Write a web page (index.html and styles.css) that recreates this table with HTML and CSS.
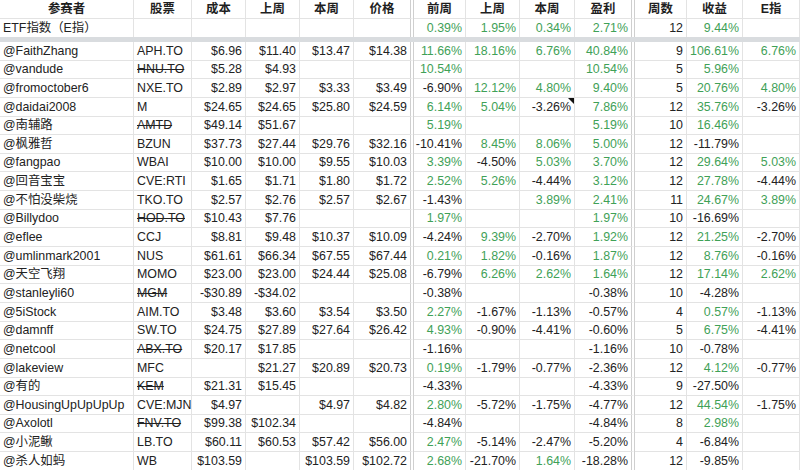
FILE: index.html
```html
<!DOCTYPE html>
<html lang="zh">
<head>
<meta charset="utf-8">
<title>参赛者</title>
<link rel="stylesheet" href="styles.css">
</head>
<body>
<div class="sheet">
  <div class="row head">
    <div class="c">参赛者</div><div class="c">股票</div><div class="c">成本</div><div class="c">上周</div><div class="c">本周</div><div class="c dbl">价格</div><div class="c">前周</div><div class="c">上周</div><div class="c">本周</div><div class="c dbl">盈利</div><div class="c">周数</div><div class="c">收益</div><div class="c">E指</div>
  </div>
  <div class="row etf">
    <div class="c l">ETF指数（E指）</div><div class="c"></div><div class="c"></div><div class="c"></div><div class="c"></div><div class="c dbl"></div><div class="c g">0.39%</div><div class="c g">1.95%</div><div class="c g">0.34%</div><div class="c dbl g">2.71%</div><div class="c">12</div><div class="c g">9.44%</div><div class="c"></div>
  </div>
  <div class="band"></div>

  <div class="row"><div class="c l">@FaithZhang</div><div class="c l">APH.TO</div><div class="c">$6.96</div><div class="c">$11.40</div><div class="c">$13.47</div><div class="c dbl">$14.38</div><div class="c g">11.66%</div><div class="c g">18.16%</div><div class="c g">6.76%</div><div class="c dbl g">40.84%</div><div class="c">9</div><div class="c g">106.61%</div><div class="c g">6.76%</div></div>
  <div class="row"><div class="c l">@vandude</div><div class="c l s">HNU.TO</div><div class="c">$5.28</div><div class="c">$4.93</div><div class="c"></div><div class="c dbl"></div><div class="c g">10.54%</div><div class="c"></div><div class="c"></div><div class="c dbl g">10.54%</div><div class="c">5</div><div class="c g">5.96%</div><div class="c"></div></div>
  <div class="row"><div class="c l">@fromoctober6</div><div class="c l">NXE.TO</div><div class="c">$2.89</div><div class="c">$2.97</div><div class="c">$3.33</div><div class="c dbl">$3.49</div><div class="c">-6.90%</div><div class="c g">12.12%</div><div class="c g">4.80%</div><div class="c dbl g">9.40%</div><div class="c">5</div><div class="c g">20.76%</div><div class="c g">4.80%</div></div>
  <div class="row"><div class="c l">@daidai2008</div><div class="c l">M</div><div class="c">$24.65</div><div class="c">$24.65</div><div class="c">$25.80</div><div class="c dbl">$24.59</div><div class="c g">6.14%</div><div class="c g">5.04%</div><div class="c note">-3.26%</div><div class="c dbl g">7.86%</div><div class="c">12</div><div class="c g">35.76%</div><div class="c">-3.26%</div></div>
  <div class="row"><div class="c l">@南辅路</div><div class="c l s">AMTD</div><div class="c">$49.14</div><div class="c">$51.67</div><div class="c"></div><div class="c dbl"></div><div class="c g">5.19%</div><div class="c"></div><div class="c"></div><div class="c dbl g">5.19%</div><div class="c">10</div><div class="c g">16.46%</div><div class="c"></div></div>
  <div class="row"><div class="c l">@枫雅哲</div><div class="c l">BZUN</div><div class="c">$37.73</div><div class="c">$27.44</div><div class="c">$29.76</div><div class="c dbl">$32.16</div><div class="c">-10.41%</div><div class="c g">8.45%</div><div class="c g">8.06%</div><div class="c dbl g">5.00%</div><div class="c">12</div><div class="c">-11.79%</div><div class="c"></div></div>
  <div class="row"><div class="c l">@fangpao</div><div class="c l">WBAI</div><div class="c">$10.00</div><div class="c">$10.00</div><div class="c">$9.55</div><div class="c dbl">$10.03</div><div class="c g">3.39%</div><div class="c">-4.50%</div><div class="c g">5.03%</div><div class="c dbl g">3.70%</div><div class="c">12</div><div class="c g">29.64%</div><div class="c g">5.03%</div></div>
  <div class="row"><div class="c l">@回音宝宝</div><div class="c l">CVE:RTI</div><div class="c">$1.65</div><div class="c">$1.71</div><div class="c">$1.80</div><div class="c dbl">$1.72</div><div class="c g">2.52%</div><div class="c g">5.26%</div><div class="c">-4.44%</div><div class="c dbl g">3.12%</div><div class="c">12</div><div class="c g">27.78%</div><div class="c">-4.44%</div></div>
  <div class="row"><div class="c l">@不怕没柴烧</div><div class="c l">TKO.TO</div><div class="c">$2.57</div><div class="c">$2.76</div><div class="c">$2.57</div><div class="c dbl">$2.67</div><div class="c">-1.43%</div><div class="c"></div><div class="c g">3.89%</div><div class="c dbl g">2.41%</div><div class="c">11</div><div class="c g">24.67%</div><div class="c g">3.89%</div></div>
  <div class="row"><div class="c l">@Billydoo</div><div class="c l s">HOD.TO</div><div class="c">$10.43</div><div class="c">$7.76</div><div class="c"></div><div class="c dbl"></div><div class="c g">1.97%</div><div class="c"></div><div class="c"></div><div class="c dbl g">1.97%</div><div class="c">10</div><div class="c">-16.69%</div><div class="c"></div></div>
  <div class="row"><div class="c l">@eflee</div><div class="c l">CCJ</div><div class="c">$8.81</div><div class="c">$9.48</div><div class="c">$10.37</div><div class="c dbl">$10.09</div><div class="c">-4.24%</div><div class="c g">9.39%</div><div class="c">-2.70%</div><div class="c dbl g">1.92%</div><div class="c">12</div><div class="c g">21.25%</div><div class="c">-2.70%</div></div>
  <div class="row"><div class="c l">@umlinmark2001</div><div class="c l">NUS</div><div class="c">$61.61</div><div class="c">$66.34</div><div class="c">$67.55</div><div class="c dbl">$67.44</div><div class="c g">0.21%</div><div class="c g">1.82%</div><div class="c">-0.16%</div><div class="c dbl g">1.87%</div><div class="c">12</div><div class="c g">8.76%</div><div class="c">-0.16%</div></div>
  <div class="row"><div class="c l">@天空飞翔</div><div class="c l">MOMO</div><div class="c">$23.00</div><div class="c">$23.00</div><div class="c">$24.44</div><div class="c dbl">$25.08</div><div class="c">-6.79%</div><div class="c g">6.26%</div><div class="c g">2.62%</div><div class="c dbl g">1.64%</div><div class="c">12</div><div class="c g">17.14%</div><div class="c g">2.62%</div></div>
  <div class="row"><div class="c l">@stanleyli60</div><div class="c l s">MGM</div><div class="c">-$30.89</div><div class="c">-$34.02</div><div class="c"></div><div class="c dbl"></div><div class="c">-0.38%</div><div class="c"></div><div class="c"></div><div class="c dbl">-0.38%</div><div class="c">10</div><div class="c">-4.28%</div><div class="c"></div></div>
  <div class="row"><div class="c l">@5iStock</div><div class="c l">AIM.TO</div><div class="c">$3.48</div><div class="c">$3.60</div><div class="c">$3.54</div><div class="c dbl">$3.50</div><div class="c g">2.27%</div><div class="c">-1.67%</div><div class="c">-1.13%</div><div class="c dbl">-0.57%</div><div class="c">4</div><div class="c g">0.57%</div><div class="c">-1.13%</div></div>
  <div class="row"><div class="c l">@damnff</div><div class="c l">SW.TO</div><div class="c">$24.75</div><div class="c">$27.89</div><div class="c">$27.64</div><div class="c dbl">$26.42</div><div class="c g">4.93%</div><div class="c">-0.90%</div><div class="c">-4.41%</div><div class="c dbl">-0.60%</div><div class="c">5</div><div class="c g">6.75%</div><div class="c">-4.41%</div></div>
  <div class="row"><div class="c l">@netcool</div><div class="c l s">ABX.TO</div><div class="c">$20.17</div><div class="c">$17.85</div><div class="c"></div><div class="c dbl"></div><div class="c">-1.16%</div><div class="c"></div><div class="c"></div><div class="c dbl">-1.16%</div><div class="c">10</div><div class="c">-0.78%</div><div class="c"></div></div>
  <div class="row"><div class="c l">@lakeview</div><div class="c l">MFC</div><div class="c"></div><div class="c">$21.27</div><div class="c">$20.89</div><div class="c dbl">$20.73</div><div class="c g">0.19%</div><div class="c">-1.79%</div><div class="c">-0.77%</div><div class="c dbl">-2.36%</div><div class="c">12</div><div class="c g">4.12%</div><div class="c">-0.77%</div></div>
  <div class="row"><div class="c l">@有的</div><div class="c l s">KEM</div><div class="c">$21.31</div><div class="c">$15.45</div><div class="c"></div><div class="c dbl"></div><div class="c">-4.33%</div><div class="c"></div><div class="c"></div><div class="c dbl">-4.33%</div><div class="c">9</div><div class="c">-27.50%</div><div class="c"></div></div>
  <div class="row"><div class="c l">@HousingUpUpUpUp</div><div class="c l">CVE:MJN</div><div class="c">$4.97</div><div class="c"></div><div class="c">$4.97</div><div class="c dbl">$4.82</div><div class="c g">2.80%</div><div class="c">-5.72%</div><div class="c">-1.75%</div><div class="c dbl">-4.77%</div><div class="c">12</div><div class="c g">44.54%</div><div class="c">-1.75%</div></div>
  <div class="row"><div class="c l">@Axolotl</div><div class="c l s">FNV.TO</div><div class="c">$99.38</div><div class="c">$102.34</div><div class="c"></div><div class="c dbl"></div><div class="c">-4.84%</div><div class="c"></div><div class="c"></div><div class="c dbl">-4.84%</div><div class="c">8</div><div class="c g">2.98%</div><div class="c"></div></div>
  <div class="row"><div class="c l">@小泥鳅</div><div class="c l">LB.TO</div><div class="c">$60.11</div><div class="c">$60.53</div><div class="c">$57.42</div><div class="c dbl">$56.00</div><div class="c g">2.47%</div><div class="c">-5.14%</div><div class="c">-2.47%</div><div class="c dbl">-5.20%</div><div class="c">4</div><div class="c">-6.84%</div><div class="c"></div></div>
  <div class="row"><div class="c l">@杀人如蚂</div><div class="c l">WB</div><div class="c">$103.59</div><div class="c"></div><div class="c">$103.59</div><div class="c dbl">$102.72</div><div class="c g">2.68%</div><div class="c">-21.70%</div><div class="c g">1.64%</div><div class="c dbl">-18.28%</div><div class="c">12</div><div class="c">-9.85%</div><div class="c"></div></div>
</div>
</body>
</html>
```

FILE: styles.css
```css
html, body {
  margin: 0;
  padding: 0;
  background: #ffffff;
}

body {
  font-family: "Liberation Sans", "Noto Sans CJK SC", sans-serif;
  font-size: 12.4px;
  color: #222222;
  overflow: hidden;
}

.sheet {
  width: 800px;
}

.row {
  display: grid;
  grid-template-columns: 134px 58px 54px 54px 54px 60px 52px 54px 55px 60px 52px 56px 57px;
  height: 18.65px;
}

.row.head {
  height: 19px;
}

.row.etf {
  height: 18px;
}

.c {
  box-sizing: border-box;
  border-right: 1px solid #e3e3e3;
  border-bottom: 1px solid #e3e3e3;
  padding: 0 3px 1px 3px;
  display: flex;
  align-items: flex-end;
  justify-content: flex-end;
  white-space: nowrap;
  overflow: hidden;
  line-height: 15px;
  position: relative;
}

.c.l {
  justify-content: flex-start;
}

.c.dbl {
  border-right: 4px double #cfcfcf;
}

.c.g {
  color: #3fa157;
}

.c.s {
  text-decoration: line-through;
}

.head .c {
  justify-content: center;
  font-weight: bold;
  font-family: "Liberation Sans", "Noto Sans CJK SC", sans-serif;
  color: #1f1f1f;
}

.etf .c {
  border-bottom: none;
}

.band {
  height: 5px;
  background: #d9dcdf;
}

.note::after {
  content: "";
  position: absolute;
  top: 0;
  right: 0;
  width: 0;
  height: 0;
  border-top: 6px solid #111;
  border-left: 6px solid transparent;
}
```
